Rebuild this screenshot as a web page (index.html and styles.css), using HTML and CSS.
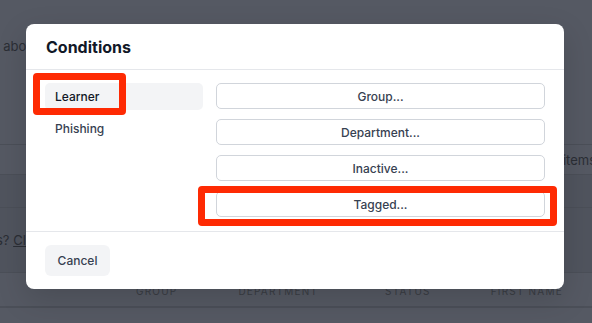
FILE: index.html
```html
<!DOCTYPE html>
<html lang="en">
<head>
  <meta charset="UTF-8" />
  <meta name="viewport" content="width=device-width, initial-scale=1.0" />
  <title>Conditions</title>
  <link rel="stylesheet" href="styles.css">
</head>
<body>
  <!-- page behind the overlay -->
  <div class="page">
    <div class="page-top">
      <span class="intro">Learners about</span>
    </div>
    <div class="page-row row-tools">
      <span class="items">items</span>
    </div>
    <div class="page-row row-empty"></div>
    <div class="page-row row-note">
      <span class="note">questions? <u>Click</u></span>
    </div>
    <div class="page-row row-head">
      <span class="col col-group">GROUP</span>
      <span class="col col-dept">DEPARTMENT</span>
      <span class="col col-status">STATUS</span>
      <span class="col col-first">FIRST NAME</span>
    </div>
    <div class="page-row row-last"></div>
  </div>

  <!-- modal -->
  <div class="modal">
    <div class="modal-header">
      <h2>Conditions</h2>
    </div>
    <div class="modal-body">
      <div class="nav">
        <div class="nav-item active">
          Learner
          <span class="mark mark-learner"></span>
        </div>
        <div class="nav-item">Phishing</div>
      </div>
      <div class="options">
        <button type="button">Group...</button>
        <button type="button">Department...</button>
        <button type="button">Inactive...</button>
        <button type="button" class="tagged">
          Tagged...
          <span class="mark mark-tagged"></span>
        </button>
      </div>
    </div>
    <div class="modal-footer">
      <button type="button" class="cancel">Cancel</button>
    </div>
  </div>
</body>
</html>
```

FILE: styles.css
```css
body {
  margin: 0;
  padding: 0;
  background: #555963;
  font-family: 'Inter', 'Noto Sans', sans-serif;
  color: #111827;
  width: 592px;
  height: 323px;
  overflow: hidden;
  position: relative;
}

/* background page (dimmed) */
.page {
  display: flex;
  flex-direction: column;
  color: #2b2e35;
  font-size: 13px;
}

.page-top {
  height: 145px;
  border-bottom: 1px solid #4b4f58;
  box-sizing: border-box;
  padding-top: 38px;
}

.intro {
  display: inline-block;
  margin-left: -55px;
  white-space: nowrap;
}

.page-row {
  box-sizing: border-box;
  border-bottom: 1px solid #4b4f58;
  display: flex;
  align-items: center;
}

.row-tools {
  height: 30px;
  justify-content: flex-end;
}

.items {
  margin-right: -4px;
  white-space: nowrap;
}

.row-empty {
  height: 33px;
  background: #50545e;
}

.row-note {
  height: 65px;
  background: #50545e;
}

.note {
  margin-left: -57px;
  white-space: nowrap;
}

.row-head {
  height: 34px;
  font-size: 10px;
  letter-spacing: 1.2px;
  color: #3a3d44;
  align-items: flex-end;
  padding-bottom: 9px;
}

.col-group { margin-left: 136px; }
.col-dept { margin-left: 61px; }
.col-status { margin-left: 67px; }
.col-first { margin-left: 60px; }

.row-last {
  flex: 1;
  height: 17px;
  background: #595d67;
}

/* modal */
.modal {
  position: absolute;
  left: 26px;
  top: 24px;
  width: 538px;
  height: 265px;
  background: #fff;
  border-radius: 8px;
  display: flex;
  flex-direction: column;
  box-shadow: 0 10px 30px rgba(0,0,0,0.15);
}

.modal-header {
  height: 46px;
  box-sizing: border-box;
  border-bottom: 1px solid #e5e7eb;
  padding: 0 20px;
  display: flex;
  align-items: center;
}

.modal-header h2 {
  margin: 0;
  font-size: 16px;
  font-weight: 700;
  color: #111827;
}

.modal-body {
  display: flex;
  gap: 13px;
  padding: 13px 19px 14px 19px;
  border-bottom: 1px solid #e5e7eb;
}

.nav {
  width: 158px;
  display: flex;
  flex-direction: column;
  gap: 5px;
}

.nav-item {
  position: relative;
  height: 27px;
  display: flex;
  align-items: center;
  padding-left: 10px;
  font-size: 12px;
  font-weight: 500;
  color: #374151;
  border-radius: 5px;
}

.nav-item.active {
  background: #f3f4f6;
  color: #111827;
}

.options {
  flex: 1;
  display: flex;
  flex-direction: column;
  gap: 10px;
}

button {
  font-family: 'Inter', 'Noto Sans', sans-serif;
  cursor: pointer;
}

.options button {
  position: relative;
  height: 26px;
  background: #fff;
  border: 1px solid #d1d5db;
  border-radius: 5px;
  font-size: 12px;
  font-weight: 500;
  color: #374151;
}

/* red annotation boxes */
.mark {
  position: absolute;
  border: 7px solid #fe2a03;
  border-radius: 4px;
  box-sizing: border-box;
  pointer-events: none;
}

.mark-learner {
  left: -12px;
  top: -10px;
  width: 93px;
  height: 42px;
}

.mark-tagged {
  left: -19px;
  top: -6px;
  width: 359px;
  height: 40px;
}

.modal-footer {
  flex: 1;
  display: flex;
  align-items: center;
  padding: 0 19px;
}

.cancel {
  width: 65px;
  height: 31px;
  border: none;
  border-radius: 6px;
  background: #f3f4f6;
  font-size: 12px;
  font-weight: 500;
  color: #374151;
}
```
